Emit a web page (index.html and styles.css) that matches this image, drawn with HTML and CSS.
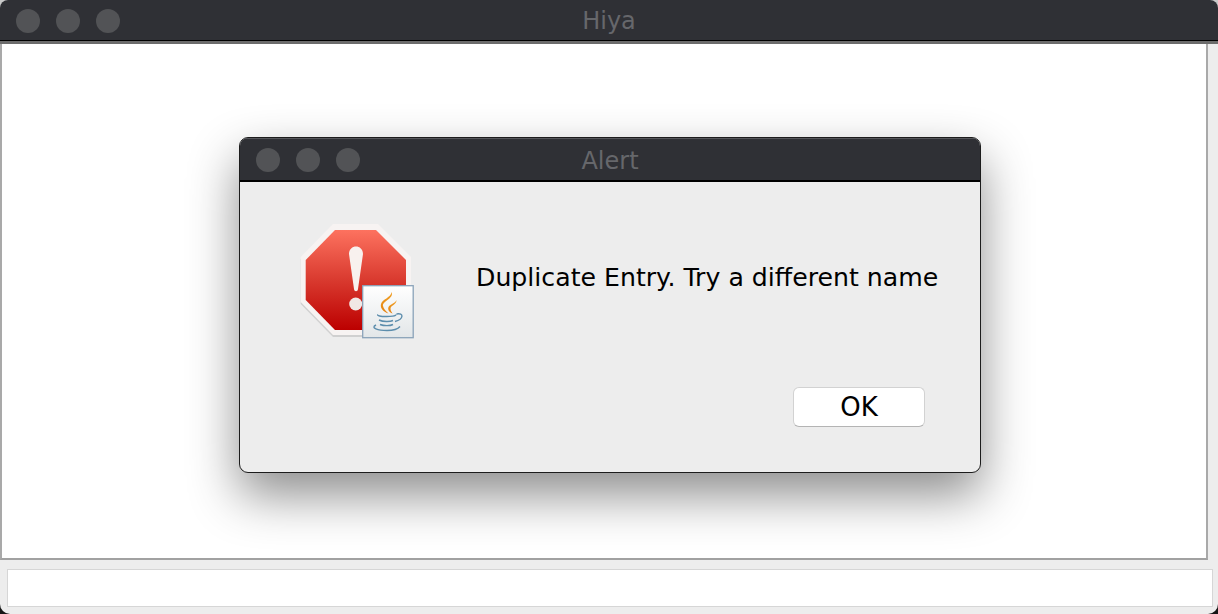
FILE: index.html
```html
<!DOCTYPE html>
<html>
<head>
  <title>Hiya</title>
  <link rel="stylesheet" href="styles.css">
</head>
<body>
  <div class="window">
    <div class="titlebar main-bar">
      <div class="lights">
        <span class="light"></span>
        <span class="light"></span>
        <span class="light"></span>
      </div>
      <div class="title">Hiya</div>
    </div>
    <div class="content"></div>
    <div class="footer">
      <div class="field"></div>
    </div>
  </div>

  <!-- Alert dialog sits over the main window -->
  <div class="dialog">
    <div class="titlebar dialog-bar">
      <div class="lights">
        <span class="light"></span>
        <span class="light"></span>
        <span class="light"></span>
      </div>
      <div class="title">Alert</div>
    </div>
    <div class="dialog-body">
      <div class="dialog-main">
        <svg class="alert-icon" width="116" height="116" viewBox="0 0 116 116">
          <defs>
            <linearGradient id="red" x1="0" y1="0" x2="0" y2="1">
              <stop offset="0" stop-color="#fd725f"/>
              <stop offset="0.5" stop-color="#d93a2f"/>
              <stop offset="1" stop-color="#bc0000"/>
            </linearGradient>
            <linearGradient id="paper" x1="0" y1="0" x2="0" y2="1">
              <stop offset="0" stop-color="#ffffff"/>
              <stop offset="1" stop-color="#e2e6e8"/>
            </linearGradient>
            <linearGradient id="flame" x1="0" y1="0" x2="0" y2="1">
              <stop offset="0" stop-color="#f0a22a"/>
              <stop offset="1" stop-color="#e5800c"/>
            </linearGradient>
          </defs>
          <polygon points="33,2 78,2 111,35 111,80 78,113 33,113 0.7,80 0.7,35" fill="#000" opacity="0.12"/>
          <polygon points="33,0 78,0 111,33 111,78 78,111 33,111 0.7,78 0.7,33" fill="#f7f3f2"/>
          <polygon points="35,6 76,6 106,36 106,76 76,106 35,106 5.7,76 5.7,36" fill="url(#red)"/>
          <path d="M49 30 C49 20 63 20 63 30 L58 65 C57.700 68 54.300 68 54 65 Z" fill="#f8f1ee"/>
          <circle cx="55.700" cy="80" r="6.500" fill="#f1e8e5"/>
          <rect x="62.700" y="61.700" width="50.500" height="52" fill="url(#paper)" stroke="#8aa3b9" stroke-width="1.300"/>
          <path d="M91.700 68 C94 75 82 77 83 82 C83.500 85 86 87 88.500 89.500 C83 87.500 80 84 81 80 C82.500 75 90.500 74 91.700 68 Z" fill="url(#flame)"/>
          <path d="M96.500 76 C96.500 81 90.500 81.500 90.500 84.500 C90.500 86.500 91.500 88 92.500 89.500 C89 88 87.500 85.500 88.500 83 C90 80 95 79.500 96.500 76 Z" fill="url(#flame)"/>
          <path d="M78 90.500 C75 93 96 93.500 96 90.500 M96.500 90 C104 88.500 104 95 95 97.500" fill="none" stroke="#5c8dac" stroke-width="1.400"/>
          <path d="M79 96 C83 98 90 98 93 96.500" fill="none" stroke="#5c8dac" stroke-width="1.400"/>
          <path d="M80 100.500 C84 102 90 102 93 100.500" fill="none" stroke="#5c8dac" stroke-width="1.400"/>
          <path d="M76 101 C70 104 78 106.500 87 106.500 C93 106.500 98 105 100 102.500" fill="none" stroke="#5c8dac" stroke-width="1.400"/>
        </svg>
        <div class="message">Duplicate Entry. Try a different name</div>
      </div>
      <div class="dialog-actions">
        <button class="ok-button" type="button">OK</button>
      </div>
    </div>
  </div>
</body>
</html>
```

FILE: styles.css
```css
html, body {
  margin: 0;
  padding: 0;
  height: 100%;
  overflow: hidden;
}

body {
  /* desktop shows through at the window corners */
  background: linear-gradient(#c9c9c9 50%, #161616 50%);
  font-family: "DejaVu Sans", "Liberation Sans", sans-serif;
  position: relative;
}

/* Main window */
.window {
  display: flex;
  flex-direction: column;
  height: 614px;
  background: #ededed;
  border-radius: 8px 8px 10px 10px;
}

.titlebar {
  position: relative;
  display: flex;
  align-items: center;
  box-sizing: border-box;
  background: #2f3035;
  color: #66676b;
  font-size: 24px;
}

.main-bar {
  height: 44px;
  flex: none;
  border-bottom: 3px solid #6c6c6c;
  border-radius: 8px 8px 0 0;
  padding-left: 16px;
}

.main-bar::after {
  content: "";
  position: absolute;
  left: 0;
  right: 0;
  bottom: 0;
  height: 1px;
  background: #000;
}

.lights {
  display: flex;
  gap: 16px;
}

.light {
  width: 24px;
  height: 24px;
  border-radius: 50%;
  background: #525356;
}

.title {
  position: absolute;
  left: 0;
  right: 0;
  top: 7px;
  text-align: center;
}

.content {
  box-sizing: border-box;
  width: 1208px;
  height: 516px;
  flex: none;
  background: #fff;
  border-left: 2px solid #a9a9a9;
  border-right: 2px solid #a9a9a9;
  border-bottom: 2px solid #a1a1a1;
}

.footer {
  flex: 1;
  padding: 9px 5px 7px 7px;
}

.field {
  box-sizing: border-box;
  height: 38px;
  background: #fff;
  border: 1px solid #d6d6d6;
}

/* Alert dialog */
.dialog {
  position: absolute;
  left: 239px;
  top: 137px;
  width: 742px;
  height: 336px;
  box-sizing: border-box;
  display: flex;
  flex-direction: column;
  background: #ededed;
  border: 1px solid #1c1c1c;
  border-radius: 9px;
  overflow: hidden;
  box-shadow: 0 22px 50px rgba(0, 0, 0, 0.45);
}

.dialog-bar {
  height: 44px;
  flex: none;
  border-top: 1px solid #55565a;
  border-bottom: 2px solid #000;
  padding-left: 16px;
}

.dialog-bar .title {
  top: 8px;
}

.dialog-body {
  flex: 1;
  display: flex;
  flex-direction: column;
  padding: 42px 55px 45px 60px;
}

.dialog-main {
  display: flex;
  align-items: flex-start;
  flex: 1;
}

.alert-icon {
  flex: none;
}

.message {
  margin-left: 60px;
  margin-top: 39px;
  color: #000;
  font-size: 25.2px;
  white-space: nowrap;
}

.dialog-actions {
  display: flex;
  justify-content: flex-end;
}

.ok-button {
  width: 132px;
  height: 40px;
  background: #fff;
  border: 1px solid #d2d2d2;
  border-bottom-color: #b4b4b4;
  border-radius: 6px;
  color: #000;
  font-family: "DejaVu Sans", "Liberation Sans", sans-serif;
  font-size: 26px;
  padding: 0;
}
```
